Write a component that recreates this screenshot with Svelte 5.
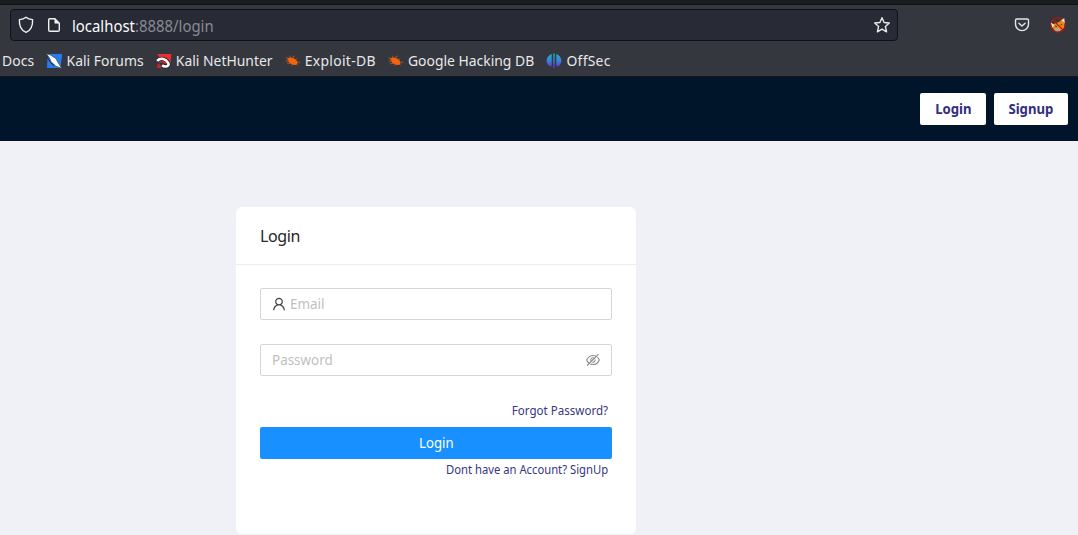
<script>
  const bookmarks = [
    { label: 'Docs', icon: null, tracking: 0.1 },
    { label: 'Kali Forums', icon: 'forums', tracking: 0.03 },
    { label: 'Kali NetHunter', icon: 'nethunter', tracking: 0 },
    { label: 'Exploit-DB', icon: 'bug', tracking: 0.33 },
    { label: 'Google Hacking DB', icon: 'bug', tracking: 0 },
    { label: 'OffSec', icon: 'offsec', tracking: 0.3 }
  ];
</script>

<div class="window">
  <div class="tabstrip"></div>
  <div class="toolbar">
    <div class="nav">
      <div class="url">
        <svg class="shield" width="16" height="18" viewBox="0 0 16 18" fill="none" stroke="#f1f1f3" stroke-width="1.4" stroke-linejoin="round"><path d="M8 1.2 C6.2 2.7 3.6 3.4 1.4 3.6 C1.1 9.5 3 14.3 8 16.4 C13 14.3 14.9 9.5 14.6 3.6 C12.4 3.4 9.8 2.7 8 1.2Z" /></svg>
        <svg class="page" width="14" height="16" viewBox="0 0 14 16"><path d="M2.7 1.7H7.8L12.3 6.2V13.1Q12.3 14.3 11.1 14.3H2.9Q1.7 14.3 1.7 13.1V2.7Q1.7 1.7 2.7 1.7Z" fill="none" stroke="#f1f1f3" stroke-width="1.4" /><path d="M7.8 1.7V6.2H12.3Z" fill="#f1f1f3" stroke="#f1f1f3" stroke-width=".6" /></svg>
        <span class="address">localhost<i>:8888/login</i></span>
        <svg class="star" width="18" height="18" viewBox="0 0 18 18" fill="none" stroke="#e9e9ec" stroke-width="1.4" stroke-linejoin="round"><path d="M9 1.7L11.1 6.5L16.3 7L12.4 10.5L13.6 15.8L9 13.1L4.4 15.8L5.6 10.5L1.7 7L6.9 6.5Z" /></svg>
      </div>
      <svg class="pocket" width="16" height="16" viewBox="0 0 16 16" fill="none" stroke="#e6e6e9" stroke-width="1.4" stroke-linecap="round" stroke-linejoin="round"><path d="M2.8 2H13.2Q14.5 2 14.5 3.3V7.3A6.5 6.3 0 0 1 1.5 7.3V3.3Q1.5 2 2.8 2Z" /><path d="M4.9 6.2L8 9.1L11.1 6.2" /></svg>
      <svg class="fox" width="16" height="16" viewBox="0 0 16 16"><circle cx="8" cy="8" r="7.2" fill="none" stroke="#b9120e" stroke-width="1.2" /><path d="M2 8.5L4.5 6.5L9 5L13 1.5L14.6 6L13.8 11L11 13.5L7 14.5L4 13Z" fill="#e58a16" /><path d="M.8 5.5L4.2 7.7L2.5 11ZM11.6 3.4L14.2 1L14.8 6Z" fill="#efe7df" /><path d="M4.4 11.4L8 10.8L11 11.8L9.6 14.2L5.6 14Z" fill="#b8a48c" /><path d="M5 9L7 9.7M10.6 8L12 7.3" stroke="#56391e" /><path d="M2.8 2.8L13.2 13.2" stroke="#b9120e" stroke-width="1.2" /></svg>
    </div>
    <div class="bookmarks">
      {#each bookmarks as b}
        <span class="bookmark">
          {#if b.icon === 'forums'}
            <svg viewBox="0 0 16 16" preserveAspectRatio="none"><path d="M1.5 1H16L14 15H.6Z" fill="#267df2" /><path d="M0 .8L4 2L9.4 5.4L12 10L15.4 15.4L9.4 13L4.6 8.6L3.3 5Z" fill="#fff" stroke="#35363c" stroke-width=".6" /><path d="M.6 3.4L4 9.4L8 13" fill="none" stroke="#24262d" stroke-width="1" /></svg>
          {:else if b.icon === 'nethunter'}
            <svg viewBox="0 0 16 16" preserveAspectRatio="none"><path d="M1.5 1H16L14.2 13L9 5L3.5 4Z" fill="#f12b32" /><path d="M2 10.4L6 13L4.6 15H1.4Z" fill="#d51f2b" /><path d="M1.4 7.8C5.2 4 10.4 6 12.6 10.2C14 13.4 9.4 14.4 6.4 12.4" fill="none" stroke="#222329" stroke-width="4" /><path d="M1.4 7.8C5.2 4 10.4 6 12.6 10.2C14 13.4 9.4 14.4 6.4 12.4" fill="none" stroke="#fff" stroke-width="2.6" /><path d="M3.4 9.8C6 7.8 9 8.6 10.4 11" fill="none" stroke="#e3232f" stroke-width="1.4" /></svg>
          {:else if b.icon === 'bug'}
            <svg viewBox="0 0 16 16" preserveAspectRatio="none" stroke="#d85e16"><path d="M3 5.4L5 4.6L8.6 5L11.8 7L13.3 10L11.6 12L8.2 11.8L4.6 9.8Z" fill="#f4650b" stroke="none" /><path d="M4 5.4L1 4.8M6 5L4.8 2.6M8.4 5.2L8.6 3L10 3.4M11.3 6.7L12.6 5.4M13 9.2H15.6M12 11.2L13.4 12.6M8.4 11.4L6.6 12.6M5.6 10.4L2.4 10.8M4.4 8.6L1 7.8M3.8 7L2.4 6.4" fill="none" stroke-width=".7" /></svg>
          {:else if b.icon === 'offsec'}
            <svg viewBox="0 0 16 16" preserveAspectRatio="none"><defs><linearGradient id="tide" gradientUnits="userSpaceOnUse" x1="0" y1="0" x2="0" y2="16"><stop stop-color="#17b6c9" /><stop offset=".5" stop-color="#3e80d8" /><stop offset="1" stop-color="#5b21cf" /></linearGradient></defs><path d="M5.7 .8V12.3Q5.3 14.3 3.3 13.1C-1 9.5 -.1 3.6 5.7 .8ZM10.3 .8V12.3Q10.7 14.3 12.7 13.1C17 9.5 16.1 3.6 10.3 .8ZM7.3 .6H8.7V15.5H7.3Z" fill="url(#tide)" /></svg>
          {/if}
          <span style:letter-spacing="{b.tracking}px">{b.label}</span>
        </span>
      {/each}
    </div>
  </div>

  <header>
    <button><span class="narrow">Login</span></button>
    <button class="signup"><span class="narrow">Signup</span></button>
  </header>

  <main>
    <section class="card">
      <h1>Login</h1>
      <form>
        <label class="field">
          <svg width="14" height="14" viewBox="64 64 896 896" fill="#404040"><path d="M858.5 763.6a374 374 0 00-80.6-119.5 375.63 375.63 0 00-119.5-80.6c-.4-.2-.8-.3-1.2-.5C719.5 518 760 444.7 760 362c0-137-111-248-248-248S264 225 264 362c0 82.7 40.5 156 102.8 201.1-.4.2-.8.3-1.2.5-44.8 18.9-85 46-119.5 80.6a375.63 375.63 0 00-80.6 119.5A371.7 371.7 0 00136 901.8a8 8 0 008 8.2h60c4.4 0 7.9-3.5 8-7.8 2-77.2 33-149.5 87.8-204.3 56.7-56.7 132-87.9 212.2-87.9s155.5 31.2 212.2 87.9C779 752.7 810 825 812 902.2c.1 4.4 3.6 7.8 8 7.8h60a8 8 0 008-8.2c-1-47.8-10.9-94.3-29.5-138.2zM512 534c-45.9 0-89.1-17.9-121.6-50.4S340 407.9 340 362c0-45.9 17.9-89.1 50.4-121.6S466.1 190 512 190s89.1 17.9 121.6 50.4S684 316.1 684 362c0 45.9-17.9 89.1-50.4 121.6S557.9 534 512 534z" /></svg>
          <input placeholder="Email" />
        </label>
        <label class="field">
          <input type="password" placeholder="Password" />
          <svg width="14" height="14" viewBox="64 64 896 896" fill="#8c8c8c"><path d="M942.2 486.2Q889.47 375.11 816.7 305l-50.88 50.88C807.31 395.53 843.45 447.4 874.7 512 791.5 684.2 673.4 766 512 766q-72.67 0-133.87-22.38L323 798.75Q408 838 512 838q288.3 0 430.2-300.3a60.29 60.29 0 000-51.5zm-63.57-320.64L836 122.88a8 8 0 00-11.32 0L715.31 232.2Q624.86 186 512 186q-288.3 0-430.2 300.3a60.3 60.3 0 000 51.5q56.69 119.4 136.5 191.41L112.48 835a8 8 0 000 11.31L155.17 889a8 8 0 0011.31 0l712.15-712.12a8 8 0 000-11.32zM149.3 512C232.6 339.8 350.7 258 512 258c54.54 0 104.13 9.36 149.12 28.39l-70.3 70.3a176 176 0 00-238.13 238.13l-83.42 83.42C223.1 637.49 183.3 582.28 149.3 512zm246.7 0a112.11 112.11 0 01146.2-106.69L401.31 546.2A112 112 0 01396 512z" /><path d="M508 624c-3.46 0-6.87-.16-10.25-.47l-52.82 52.82a176.09 176.09 0 00227.42-227.42l-52.82 52.82c.31 3.38.47 6.79.47 10.25a111.94 111.94 0 01-112 112z" /></svg>
        </label>
        <a class="forgot">Forgot Password?</a>
        <button type="button" class="submit"><span class="narrow">Login</span></button>
        <a class="register">Dont have an Account? SignUp</a>
      </form>
    </section>
  </main>
</div>

<style>
  :global(body) { margin: 0; }
  .window, button, input { font-family: 'Noto Sans', sans-serif; }
  .window { width: 1078px; height: 535px; overflow: hidden; display: flex; flex-direction: column; background: #f0f1f6; }
  .window * { box-sizing: border-box; }
  svg { display: block; flex: none; }
  .narrow { display: inline-block; transform: scaleX(.94); }
  .tabstrip { height: 5px; flex: none; background: #1b1c20; border-bottom: 1px solid #111216; }
  .toolbar { height: 72px; flex: none; background: #34373e; border-bottom: 1px solid #15171b; }
  .nav { height: 41px; padding: 4px 12px 0 10px; display: flex; align-items: flex-start; }
  .url { width: 888px; height: 32px; display: flex; align-items: center; border: 1px solid #101115; border-radius: 4px; background: #282a35; padding: 0 6px 0 7px; }
  .page { margin-left: 13px; }
  .address { margin-left: 11px; flex: 1; padding-top: 1px; font-size: 16px; line-height: 30px; color: #fbfbfe; white-space: nowrap; transform: scaleX(.931); transform-origin: 0 50%; }
  .address i { font-style: normal; color: #898b94; }
  .pocket { margin: 8px 0 0 116px; }
  .fox { margin: 8px 0 0 20px; }
  .bookmarks { display: flex; gap: 13.1px; padding-left: 2.2px; height: 30px; color: #e7e8eb; font-size: 15px; line-height: 28px; white-space: nowrap; transform: scaleX(.927); transform-origin: 0 50%; }
  .bookmark { display: flex; align-items: center; gap: 4.4px; }
  .bookmark svg { width: 17.26px; height: 16px; }
  .bookmark span { padding-bottom: 2px; }
  header { height: 64px; flex: none; background: #001529; display: flex; justify-content: flex-end; gap: 8px; padding: 16px 10px 0 0; }
  header button { width: 66px; height: 32px; border: 0; border-radius: 2px; background: #fff; color: #312e7f; font-weight: 700; font-size: 14px; padding: 0 0 1px; }
  header .signup { width: 74px; }
  main { padding: 66px 0 0 236px; }
  .card { width: 400px; height: 327px; background: #fff; border-radius: 6px; }
  h1 { margin: 0; height: 58px; padding: 0 24px; line-height: 59px; font-size: 16px; font-weight: 400; color: #262626; border-bottom: 1px solid #ededed; }
  h1::first-line { letter-spacing: -.4px; }
  form { padding: 23px 24px; display: flex; flex-direction: column; }
  .field { height: 32px; margin-bottom: 24px; display: flex; align-items: center; border: 1px solid #d6d6d6; border-radius: 2px; padding: 0 11px; }
  .field input { flex: 1; min-width: 0; border: 0; padding: 0 0 2px; margin: 0 4px 0 0; outline: 0; background: none; font-size: 14px; height: 22px; transform: scaleX(.96); transform-origin: 0 50%; }
  .field svg + input { margin: 0 0 0 4px; }
  input::placeholder { color: #bfbfbf; }
  a { align-self: flex-end; color: #36377f; font-size: 12.5px; line-height: 22px; margin-right: 4px; white-space: nowrap; transform-origin: 100% 50%; }
  .forgot { transform: scaleX(.925); }
  .register { transform: scaleX(.9); }
  .submit { height: 32px; margin-top: 5px; border: 0; border-radius: 2px; background: #1890ff; color: #fff; font-size: 14px; padding: 0 0 1px; }
</style>
